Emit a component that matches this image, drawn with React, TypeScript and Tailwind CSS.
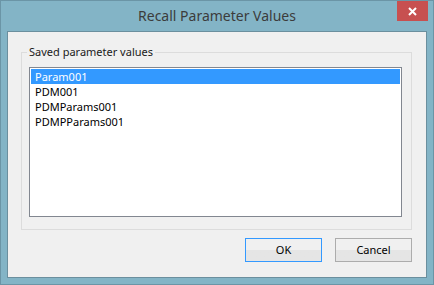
const items = ["Param001", "PDM001", "PDMParams001", "PDMPParams001"];

export default function App() {
  const selected = 0;

  return (
    <div
      className="flex h-[285px] w-[434px] flex-col border border-[#6b95a6] bg-[#83b4c6] text-[#1a1a1a]"
      style={{ fontFamily: '"Noto Sans", "Open Sans", sans-serif' }}
    >
      {/* title bar */}
      <div className="relative flex h-[30px] shrink-0 items-center justify-center">
        <span className="text-[14px] leading-none text-[#3c3c3c]">Recall Parameter Values</span>
        <button
          type="button"
          className="absolute right-[5px] top-0 flex h-[20px] w-[31px] items-center justify-center bg-[#c75050]"
        >
          <svg width="9" height="9" viewBox="0 0 9 9">
            <path d="M1 1 L8 8 M8 1 L1 8" stroke="#fff" strokeWidth="2" />
          </svg>
        </button>
      </div>

      {/* client area */}
      <div className="mx-[6px] mb-[6px] flex flex-1 flex-col border border-[#6b8f9e] bg-[#f0f0f0] pl-[13px] pr-[14px] pt-[20px]">
        <div className="relative border border-[#dcdcdc] pb-[12px] pl-[7px] pr-[9px] pt-[14px]">
          <span className="absolute left-[5px] top-[-9px] bg-[#f0f0f0] px-[2px] text-[11px] leading-[16px] text-[#1a1a1a]">
            Saved parameter values
          </span>
          <div className="h-[150px] w-[373px] border border-[#828790] bg-white p-px">
            {items.map((item, i) => (
              <div
                key={item}
                className={
                  i === selected
                    ? "h-[15px] overflow-hidden bg-[#3399ff] pl-[4px] text-[11px] leading-[15px] text-white"
                    : "h-[15px] overflow-hidden pl-[4px] text-[11px] leading-[15px] text-black"
                }
              >
                {item}
              </div>
            ))}
          </div>
        </div>

        <div className="mt-[8px] flex justify-end gap-[13px]">
          <button
            type="button"
            className="h-[24px] w-[77px] border border-[#3399ff] bg-gradient-to-b from-[#f0f0f0] from-50% to-[#e5e5e5] to-50% text-[11px] text-black"
          >
            OK
          </button>
          <button
            type="button"
            className="h-[24px] w-[77px] border border-[#acacac] bg-gradient-to-b from-[#f0f0f0] from-50% to-[#e5e5e5] to-50% text-[11px] text-black"
          >
            Cancel
          </button>
        </div>
      </div>
    </div>
  );
}
